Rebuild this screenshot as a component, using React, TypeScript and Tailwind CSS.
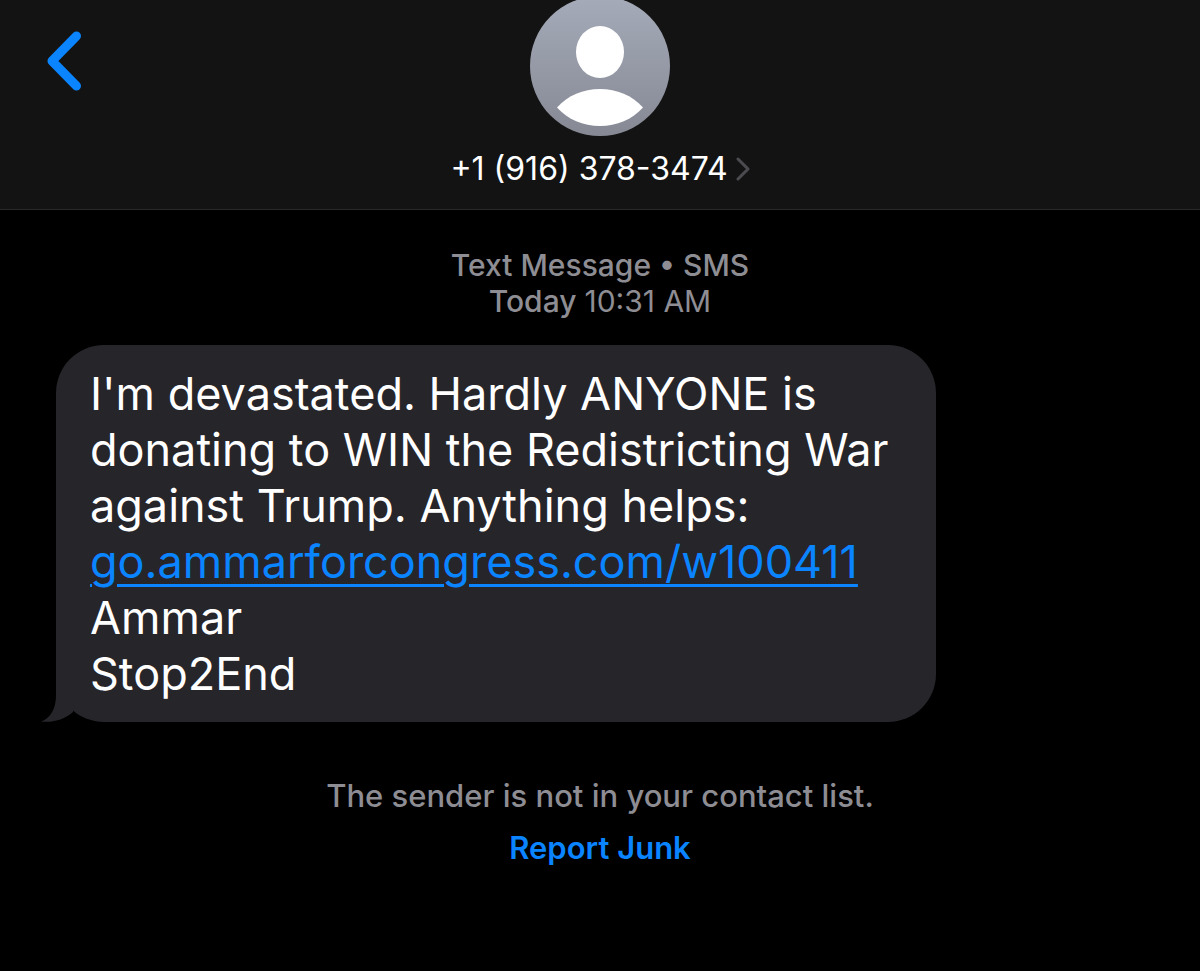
const MESSAGE = "I'm devastated. Hardly ANYONE is donating to WIN the Redistricting War against Trump. Anything helps:";
const LINK = 'go.ammarforcongress.com/w100411';
const SIGNATURE = ['Ammar', 'Stop2End'];

function BackIcon() {
  return (
    <svg width="36" height="60" viewBox="0 0 36 60" fill="none" aria-hidden="true">
      <path d="M30.5 5 6 30l24.500 25" stroke="currentColor" strokeWidth="9" strokeLinecap="round" strokeLinejoin="round" />
    </svg>
  );
}

function Avatar() {
  return (
    <svg className="-mt-1" width="140" height="140" viewBox="0 0 140 140" aria-hidden="true">
      <defs>
        <linearGradient id="avatar" x1="0" y1="0" x2="0" y2="1">
          <stop offset="0" stopColor="#a5abb9" />
          <stop offset="1" stopColor="#868994" />
        </linearGradient>
      </defs>
      <circle cx="70" cy="70" r="70" fill="url(#avatar)" />
      <ellipse cx="70" cy="56" rx="24" ry="26" fill="#fff" />
      <path d="M27 111.500C38 99.500 53 93 70 93s32 6.500 43 18.500C102 123.500 87 130 70 130s-32-6.500-43-18.500Z" fill="#fff" />
    </svg>
  );
}

function BubbleTail() {
  return (
    <svg className="absolute bottom-0 -left-4" width="40" height="48" viewBox="0 0 40 48" aria-hidden="true">
      <path d="M16 0v21C16 34 11 44 1 47.500 14 49 25 45 33 38L34 0Z" fill="#26252a" />
    </svg>
  );
}

export default function App() {
  return (
    <div className="min-h-screen bg-black font-['Inter',sans-serif] text-white">
      <header className="grid grid-cols-[1fr_auto_1fr] items-start border-b border-[#29292b] bg-[#131313] pb-5">
        <button type="button" aria-label="Back" className="mt-[31px] ml-[46px] justify-self-start text-[#0a84ff]">
          <BackIcon />
        </button>
        <button type="button" className="flex flex-col items-center">
          <Avatar />
          <span className="mt-[13px] flex items-center gap-2 text-[32px] leading-10">
            +1 (916) 378-3474
            <svg width="14" height="24" viewBox="0 0 14 24" fill="none" aria-hidden="true">
              <path d="m2 2 10 10L2 22" stroke="#4c4c50" strokeWidth="3" strokeLinecap="round" strokeLinejoin="round" />
            </svg>
          </span>
        </button>
      </header>

      <main className="px-14 pt-[37px]">
        <p className="text-center text-[30px] leading-9 font-medium text-[#8d8d93]">
          Text Message • SMS
          <br />
          Today <span className="font-normal">10:31 AM</span>
        </p>

        <div className="relative mt-[26px] max-w-[880px] rounded-[48px] bg-[#26252a] px-[34px] pt-[21px] pb-5 text-[45px] leading-[56px]">
          <BubbleTail />
          <p>{MESSAGE}</p>
          <a href={`https://${LINK}`} className="text-[#0a84ff] underline decoration-[3px] underline-offset-[6px]">
            {LINK}
          </a>
          {SIGNATURE.map((line) => (
            <p key={line}>{line}</p>
          ))}
        </div>

        <div className="mt-14 flex flex-col items-center gap-4 text-[31px] leading-9">
          <p className="font-medium text-[#8d8d93]">The sender is not in your contact list.</p>
          <button type="button" className="font-semibold text-[#0a84ff]">
            Report Junk
          </button>
        </div>
      </main>
    </div>
  );
}
